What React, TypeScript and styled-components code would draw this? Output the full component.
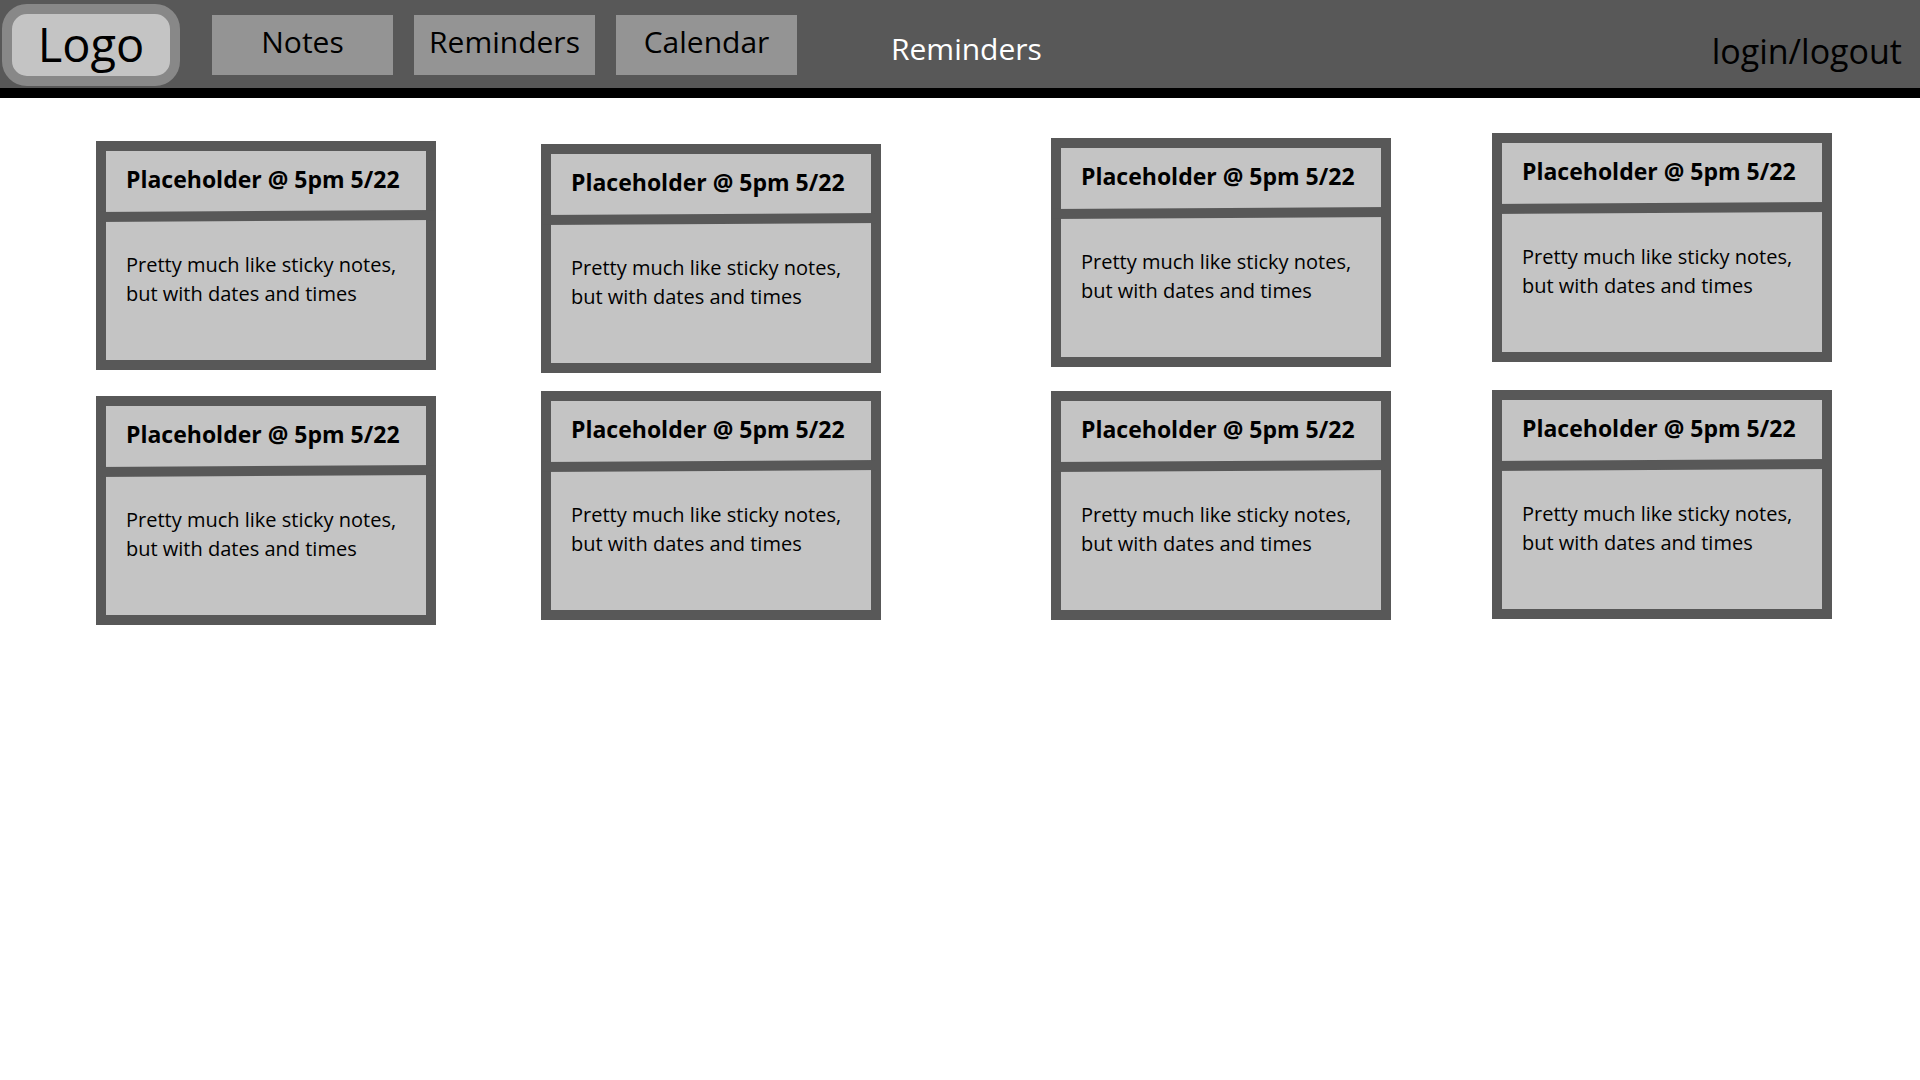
import React from "react";
import styled, { createGlobalStyle } from "styled-components";

const GlobalStyle = createGlobalStyle`
  *, *::before, *::after { box-sizing: border-box; }
  body {
    margin: 0;
    background: #ffffff;
    color: #000000;
    font-family: "Segoe UI", "Open Sans", "Noto Sans", sans-serif;
  }
`;

const Header = styled.header`
  display: flex;
  align-items: center;
  min-height: 98px;
  padding: 4px 18px 2px 2px;
  background: #585858;
  border-bottom: 10px solid #000000;
`;

const Logo = styled.a`
  display: flex;
  justify-content: center;
  width: 178px;
  height: 82px;
  border: 10px solid #888888;
  border-radius: 25px;
  background: #c4c4c4;
  color: #000000;
  font-size: 47px;
  line-height: 60px;
  text-decoration: none;
`;

const Nav = styled.nav`
  display: flex;
  gap: 21px;
  margin-left: 32px;
`;

const NavLink = styled.a`
  display: flex;
  justify-content: center;
  width: 181px;
  height: 60px;
  padding-top: 5px;
  background: #949494;
  color: #000000;
  font-size: 30px;
  line-height: 44px;
  text-decoration: none;
`;

const PageTitle = styled.h1`
  margin: 0 0 0 94px;
  padding-top: 8px;
  color: #ffffff;
  font-size: 30px;
  font-weight: 400;
  line-height: 44px;
`;

const AuthLink = styled.a`
  margin-left: auto;
  padding-top: 12px;
  color: #000000;
  font-size: 34px;
  line-height: 44px;
  text-decoration: none;
`;

const Board = styled.main`
  display: grid;
  grid-template-columns: 445fr 510fr 441fr 340px;
  align-items: start;
  padding: 35px 88px 35px 96px;
`;

const Column = styled.section<{ $top: number; $gap: number }>`
  display: flex;
  flex-direction: column;
  align-items: flex-start;
  gap: ${(p) => p.$gap}px;
  padding-top: ${(p) => p.$top}px;
`;

const Card = styled.article`
  width: 340px;
  min-height: 229px;
  border: 10px solid #585858;
  background: #c4c4c4;
`;

const CardTitle = styled.h2`
  margin: 0;
  padding: 12px 0 16px 20px;
  font-size: 23px;
  font-weight: 700;
  line-height: 32px;
  white-space: nowrap;
`;

/* The rule leans slightly, as if drawn by hand. */
const Rule = styled.hr`
  height: 10px;
  margin: 0 -10px;
  border: 0;
  background: #585858;
  transform: rotate(-0.35deg);
`;

const CardText = styled.p`
  margin: 0;
  padding: 29px 0 29px 20px;
  font-size: 20px;
  line-height: 29px;
  white-space: nowrap;
`;

const navItems = ["Notes", "Reminders", "Calendar"];

const reminder = {
  title: "Placeholder @ 5pm 5/22",
  lines: ["Pretty much like sticky notes,", "but with dates and times"],
};

const columns = [
  { top: 8, gap: 26, cards: [reminder, reminder] },
  { top: 11, gap: 18, cards: [reminder, reminder] },
  { top: 5, gap: 24, cards: [reminder, reminder] },
  { top: 0, gap: 28, cards: [reminder, reminder] },
];

export default function App() {
  return (
    <>
      <GlobalStyle />
      <Header>
        <Logo href="#home">Logo</Logo>
        <Nav aria-label="Main">
          {navItems.map((item) => (
            <NavLink key={item} href={`#${item.toLowerCase()}`}>
              {item}
            </NavLink>
          ))}
        </Nav>
        <PageTitle>Reminders</PageTitle>
        <AuthLink href="#login">login/logout</AuthLink>
      </Header>
      <Board>
        {columns.map((column, c) => (
          <Column key={c} $top={column.top} $gap={column.gap}>
            {column.cards.map((card, i) => (
              <Card key={i}>
                <CardTitle>{card.title}</CardTitle>
                <Rule />
                <CardText>
                  {card.lines[0]}
                  <br />
                  {card.lines[1]}
                </CardText>
              </Card>
            ))}
          </Column>
        ))}
      </Board>
    </>
  );
}
